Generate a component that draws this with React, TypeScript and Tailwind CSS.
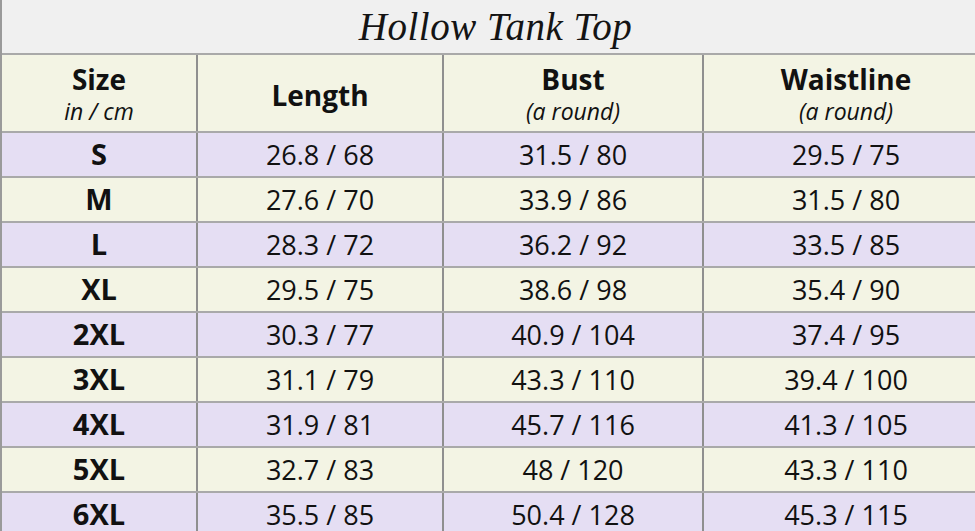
const rows = [
  { size: "S", length: "26.8 / 68", bust: "31.5 / 80", waist: "29.5 / 75" },
  { size: "M", length: "27.6 / 70", bust: "33.9 / 86", waist: "31.5 / 80" },
  { size: "L", length: "28.3 / 72", bust: "36.2 / 92", waist: "33.5 / 85" },
  { size: "XL", length: "29.5 / 75", bust: "38.6 / 98", waist: "35.4 / 90" },
  { size: "2XL", length: "30.3 / 77", bust: "40.9 / 104", waist: "37.4 / 95" },
  { size: "3XL", length: "31.1 / 79", bust: "43.3 / 110", waist: "39.4 / 100" },
  { size: "4XL", length: "31.9 / 81", bust: "45.7 / 116", waist: "41.3 / 105" },
  { size: "5XL", length: "32.7 / 83", bust: "48 / 120", waist: "43.3 / 110" },
  { size: "6XL", length: "35.5 / 85", bust: "50.4 / 128", waist: "45.3 / 115" },
];

const cell = "flex items-center justify-center border-r-2 border-[#8f8f8f]";

export default function App() {
  return (
    <div className="w-[975px] h-[531px] overflow-hidden bg-[#f0f0f0] border-l-2 border-[#9a9a9a] text-[#111] font-['Open_Sans',sans-serif]">
      <div className="h-[55px] flex items-center justify-center border-b-2 border-[#a9a9a9] bg-[#f0f0f0]">
        <h1 className="pl-[14px] pt-[2px] text-[39px] italic font-['Liberation_Serif',serif] tracking-[0.5px] text-[#141414]">
          Hollow Tank Top
        </h1>
      </div>

      <div className="flex w-[1000px] h-[78px] bg-[#f3f4e4] border-b-2 border-[#a9a9a9]">
        <div className={`${cell} w-[196px] flex-col`}>
          <span className="text-[28px] font-bold leading-[34px] mt-[2px]">Size</span>
          <span className="text-[23px] italic leading-[30px]">in / cm</span>
        </div>
        <div className={`${cell} w-[246px]`}>
          <span className="text-[28px] font-bold pt-[4px]">Length</span>
        </div>
        <div className={`${cell} w-[260px] flex-col`}>
          <span className="text-[28px] font-bold leading-[34px] mt-[2px]">Bust</span>
          <span className="text-[23px] italic leading-[30px]">(a round)</span>
        </div>
        <div className="flex flex-col items-center w-[284px] justify-center">
          <span className="text-[28px] font-bold leading-[34px] mt-[2px]">Waistline</span>
          <span className="text-[23px] italic leading-[30px]">(a round)</span>
        </div>
      </div>

      {rows.map((r, i) => (
        <div
          key={r.size}
          className={`flex w-[1000px] h-[45px] border-b-2 border-[#a9a9a9] leading-[34px] ${
            i % 2 === 0 ? "bg-[#e5def3]" : "bg-[#f3f4e4]"
          }`}
        >
          <div className={`${cell} w-[196px] text-[29px] font-bold pb-[2px]`}>{r.size}</div>
          <div className={`${cell} w-[246px] text-[27px]`}>{r.length}</div>
          <div className={`${cell} w-[260px] text-[27px]`}>{r.bust}</div>
          <div className="flex items-center justify-center w-[284px] text-[27px]">{r.waist}</div>
        </div>
      ))}
    </div>
  );
}
